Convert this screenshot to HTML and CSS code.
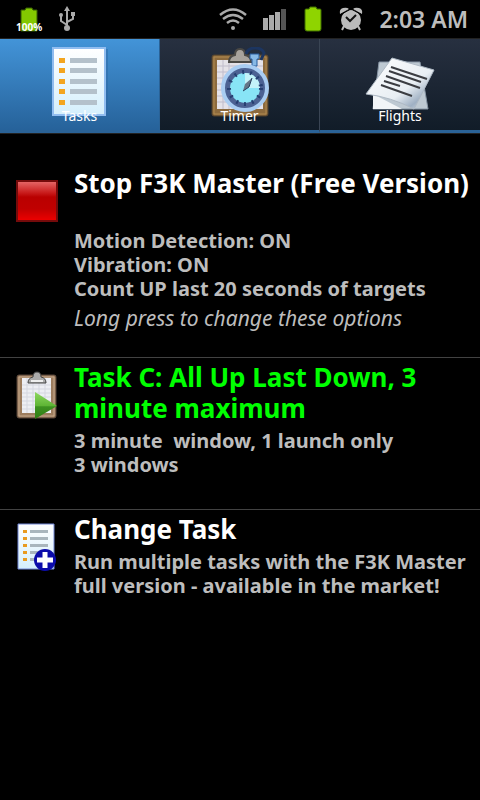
FILE: index.html
```html
<!DOCTYPE html>
<html lang="en">
<head>
    <meta charset="UTF-8">
    <meta name="viewport" content="width=device-width, initial-scale=1.0">
    <title>F3K Master</title>
    <link rel="stylesheet" href="styles.css">
</head>
<body>
    <header class="status-bar">
        <div class="status-left">
            <div class="battery-level">
                <svg width="20" height="25" viewBox="0 0 20 25" aria-hidden="true">
                    <path d="M2 3h4l1-2h6l1 2h4v21H2z" fill="#83c800" stroke="#355c00"/>
                </svg>
                <span class="battery-text">100%</span>
            </div>
            <svg width="18" height="28" viewBox="0 0 18 28" fill="none" stroke="#aaa" stroke-width="2" aria-hidden="true">
                <path d="M9 4v19M9 20L3 16v-5M9 17l6-3V9"/>
                <path d="M9 1l3 5H6z" fill="#aaa" stroke="none"/>
                <circle cx="3" cy="10" r="2" fill="#aaa" stroke="none"/>
                <path d="M13 7h4v4h-4z" fill="#aaa" stroke="none"/>
                <circle cx="9" cy="23" r="3" fill="#aaa" stroke="none"/>
            </svg>
        </div>
        <div class="status-right">
            <svg width="28" height="24" viewBox="0 0 28 24" fill="none" stroke="#aaa" stroke-width="2.4" aria-hidden="true">
                <path d="M1 8q13-11 26 0M4 12q10-8 20 0M8 16q6-5 12 0"/>
                <circle cx="14" cy="21" r="2" fill="#aaa" stroke="none"/>
            </svg>
            <svg width="24" height="22" viewBox="0 0 24 22" fill="#aaa" aria-hidden="true">
                <path d="M0 10h5v12H0zM6 7h5v15H6zM12 4h5v18h-5z"/>
                <path d="M18 1h5v21h-5z" fill="#555"/>
            </svg>
            <svg width="20" height="26" viewBox="0 0 20 26" aria-hidden="true">
                <path d="M2 4q0-1 1-1h3l1-2h6l1 2h3q1 0 1 1v19q0 2-2 2H4q-2 0-2-2z" fill="#8fd400" stroke="#3f6c00"/>
            </svg>
            <svg width="24" height="26" viewBox="0 0 24 26" aria-hidden="true">
                <path d="M5 20l-2 4M19 20l2 4" stroke="#bbb" stroke-width="2"/>
                <circle cx="12" cy="14" r="10" fill="#bbb"/>
                <path d="M1 8q-1-5 3-6t6 1zM23 8q1-5-3-6t-6 1z" fill="#bbb"/>
                <path d="M1 9l9-5M23 9l-9-5" stroke="#000"/>
                <path d="M7 11l4 4 6-6" fill="none" stroke="#111" stroke-width="2"/>
            </svg>
            <time class="clock">2:03 AM</time>
        </div>
    </header>

    <nav class="tabs" role="tablist">
        <button class="tab active" role="tab" aria-selected="true">
            <svg class="tab-icon" viewBox="0 0 70 70" aria-hidden="true">
                <defs>
                    <linearGradient id="paper" x1="0" y1="0" x2="0" y2="1">
                        <stop offset="0" stop-color="#fff"/>
                        <stop offset="1" stop-color="#d4effc"/>
                    </linearGradient>
                </defs>
                <path d="M10 2h53v68H10z" fill="#2c68a4" opacity=".5"/>
                <path d="M8 1h52v67H8z" fill="url(#paper)" stroke="#91bdf0" stroke-width="2"/>
                <path d="M14 11h6v5h-6zM14 21h6v5h-6zM14 32h6v5h-6zM14 42h6v5h-6zM14 53h6v5h-6z" fill="#f3a51f"/>
                <path d="M25 11h27v5H25zM25 21h27v5H25zM25 32h27v5H25zM25 42h27v5H25zM25 53h27v5H25z" fill="#b4c1cb"/>
            </svg>
            <span class="tab-label">Tasks</span>
        </button>
        <button class="tab" role="tab" aria-selected="false">
            <svg class="tab-icon" viewBox="0 0 70 70" aria-hidden="true">
                <rect x="7" y="8" width="56" height="61" rx="2" fill="#8c6a3d" stroke="#51402c"/>
                <path d="M9 10h52v57H9z" fill="none" stroke="#b18a50"/>
                <path d="M12 13h46v49H12z" fill="#e5e2e8"/>
                <path d="M12 19h46M12 25h46M12 31h46M12 37h46M12 43h46M12 49h46M12 55h46M18 13v49M24 13v49M51 13v49" stroke="#c0bccb"/>
                <path d="M24 15q0-6 6-7 0-6 5-6t5 6q6 1 6 7z" fill="#a8a39c" stroke="#4b4945" stroke-width="2"/>
                <path d="M41 7q2-6 9-6t9 5l-3 7" fill="none" stroke="#1c3560" stroke-width="3"/>
                <path d="M45 7h9v5h-2v7h-5v-7h-2z" fill="#88b9e5" stroke="#285d9d"/>
                <circle cx="40" cy="41" r="22" fill="#4c6293" stroke="#a9cdf2" stroke-width="4"/>
                <circle cx="40" cy="41" r="15" fill="#88e4f6"/>
                <path d="M40 26a15 15 0 0 1 15 15H40z" fill="#c3f3f9"/>
                <circle cx="40" cy="41" r="16" fill="none" stroke="#263f71" stroke-width="4" stroke-dasharray="2 6"/>
                <path d="M38 44l2-7 7-6-3 9z" fill="#657687"/>
                <path d="M38 44l6-4 3-9" fill="none" stroke="#263e5c"/>
            </svg>
            <span class="tab-label">Timer</span>
        </button>
        <button class="tab" role="tab" aria-selected="false">
            <svg class="tab-icon" viewBox="0 0 70 70" aria-hidden="true">
                <defs>
                    <linearGradient id="sheet" x1="0" y1="0" x2="1" y2="1">
                        <stop offset="0" stop-color="#fff"/>
                        <stop offset=".6" stop-color="#e8eef3"/>
                        <stop offset=".8" stop-color="#9fb0c3"/>
                        <stop offset="1" stop-color="#eef3f7"/>
                    </linearGradient>
                </defs>
                <path d="M14 15h41l8 47H8z" fill="#bec9d2" stroke="#8795a4"/>
                <path d="M8 47l29 15H8z" fill="#f2f5f7"/>
                <path d="M27 11l42 12-20 39q-23-12-48-15z" fill="url(#sheet)" stroke="#aeb9c4"/>
                <path d="M26 20l36 12M24 24l32 11M21 29l34 12M19 34l16 5M16 38l31 11" stroke="#3b3d42" stroke-width="2"/>
            </svg>
            <span class="tab-label">Flights</span>
        </button>
    </nav>

    <main class="list">
        <button class="row row-stop">
            <svg class="row-icon" viewBox="0 0 42 50" aria-hidden="true">
                <defs>
                    <linearGradient id="red" x1="0" y1="0" x2="0" y2="1">
                        <stop offset="0" stop-color="#e76b6b"/>
                        <stop offset=".3" stop-color="#c81a1a"/>
                        <stop offset=".4" stop-color="#b90000"/>
                        <stop offset=".7" stop-color="#c00000"/>
                        <stop offset="1" stop-color="#f00000"/>
                    </linearGradient>
                </defs>
                <path d="M1 5h40v40H1z" fill="url(#red)" stroke="#750b0b" stroke-width="2"/>
            </svg>
            <span class="row-text">
                <span class="title">Stop F3K Master (Free Version)</span>
                <span class="details">Motion Detection: ON<br>Vibration: ON<br>Count UP last 20 seconds of targets</span>
                <span class="hint">Long press to change these options</span>
            </span>
        </button>
        <button class="row row-task">
            <svg class="row-icon" viewBox="0 0 42 50" aria-hidden="true">
                <defs>
                    <linearGradient id="play" x1="0" y1="0" x2="0" y2="1">
                        <stop offset="0" stop-color="#8fd860"/>
                        <stop offset=".5" stop-color="#5fb535"/>
                        <stop offset=".55" stop-color="#3d9120"/>
                        <stop offset="1" stop-color="#2f7d14"/>
                    </linearGradient>
                </defs>
                <rect x="1" y="5" width="39" height="43" rx="2" fill="#9d7d5e" stroke="#564538"/>
                <path d="M3 7h35v39H3z" fill="none" stroke="#c6ab8e"/>
                <path d="M6 8h29v35H6z" fill="#edeef3"/>
                <path d="M6 15h29M6 19h29M6 23h29M6 27h29M6 31h29M6 35h29M6 39h29M11 8v35M17 8v35M23 8v35M29 8v35" stroke="#d5d7e0"/>
                <path d="M12 13q0-5 5-6 0-5 4-5t4 5q5 1 5 6z" fill="#aaa" stroke="#444"/>
                <path d="M15 11h12" stroke="#eee" stroke-width="2"/>
                <path d="M19 22l22 14-22 13z" fill="url(#play)"/>
            </svg>
            <span class="row-text">
                <span class="title current">Task C: All Up Last Down, 3 minute maximum</span>
                <span class="details">3 minute&nbsp; window, 1 launch only<br>3 windows</span>
            </span>
        </button>
        <button class="row row-change">
            <svg class="row-icon" viewBox="0 0 42 50" aria-hidden="true">
                <path d="M2 2h36v45H2z" fill="url(#paper)" stroke="#7187d6"/>
                <path d="M7 8h4v3H7zM7 15h4v3H7zM7 22h4v3H7zM7 29h4v3H7zM7 36h4v3H7z" fill="#e99b20"/>
                <path d="M14 8h18v3H14zM14 15h18v3H14zM14 22h18v3H14zM14 29h18v3H14zM14 36h18v3H14z" fill="#a9b6bd"/>
                <circle cx="29" cy="38" r="11" fill="#0c0caa"/>
                <path d="M29 30v16M21 38h16" stroke="#fff" stroke-width="5"/>
            </svg>
            <span class="row-text">
                <span class="title">Change Task</span>
                <span class="details">Run multiple tasks with the F3K Master full version - available in the market!</span>
            </span>
        </button>
    </main>
</body>
</html>
```
FILE: styles.css
```css
:root {
    --text: #bdbdbd;
    --divider: #424242;
    --accent: #2a6296;
    --current: #00ff00;
}

* {
    margin: 0;
    padding: 0;
    box-sizing: border-box;
}

body {
    font-family: 'Noto Sans', 'Open Sans', sans-serif;
    background: #000;
    color: #fff;
    min-height: 100vh;
}

button {
    font: inherit;
    color: inherit;
    background: none;
    border: none;
    cursor: pointer;
}

svg {
    display: block;
    flex-shrink: 0;
}

.status-bar {
    display: flex;
    justify-content: space-between;
    align-items: center;
    height: 38px;
    padding: 0 12px 0 16px;
}

.status-left,
.status-right {
    display: flex;
    align-items: center;
    gap: 16px;
}

.battery-level {
    display: grid;
    justify-items: center;
    width: 26px;
}

.battery-level > * {
    grid-area: 1 / 1;
}

.battery-text {
    align-self: end;
    font-size: 10px;
    font-weight: 700;
    line-height: 10px;
}

.clock {
    color: var(--text);
    font-size: 23px;
    font-weight: 600;
    line-height: 32px;
}

.tabs {
    display: grid;
    grid-template-columns: repeat(3, 1fr);
    height: 96px;
    border-top: 1px solid #222;
    border-bottom: 1px solid #222;
}

.tab {
    display: grid;
    justify-items: center;
    padding-top: 8px;
    background: linear-gradient(#273040, #111c28);
    border-right: 1px solid #3a4554;
    border-bottom: 3px solid var(--accent);
}

.tab:last-child {
    border-right: none;
}

.tab.active {
    background: linear-gradient(#4394d8, #26629a);
    border-right-color: var(--accent);
}

.tab-icon {
    grid-area: 1 / 1;
    width: 70px;
    height: 70px;
}

.tab-label {
    grid-area: 1 / 1;
    align-self: end;
    font-size: 14px;
    line-height: 20px;
    padding-bottom: 4px;
}

.row {
    display: flex;
    align-items: flex-start;
    gap: 16px;
    width: 100%;
    padding: 4px 0 32px 16px;
    text-align: left;
    border-bottom: 1px solid var(--divider);
}

.row-icon {
    width: 42px;
    height: 50px;
    margin-top: 8px;
}

.row-text {
    display: flex;
    flex-direction: column;
    gap: 5px;
}

.title {
    font-size: 26px;
    font-weight: 700;
    line-height: 31px;
}

.title.current {
    color: var(--current);
}

.details,
.hint {
    color: var(--text);
    font-size: 20px;
    line-height: 24px;
}

.details {
    font-weight: 700;
}

.hint {
    font-size: 21px;
    font-style: italic;
}

.row-stop {
    padding-top: 34px;
    padding-bottom: 27px;
}

.row-stop .title {
    margin-bottom: 25px;
}

.row-change {
    border-bottom: none;
}
```
